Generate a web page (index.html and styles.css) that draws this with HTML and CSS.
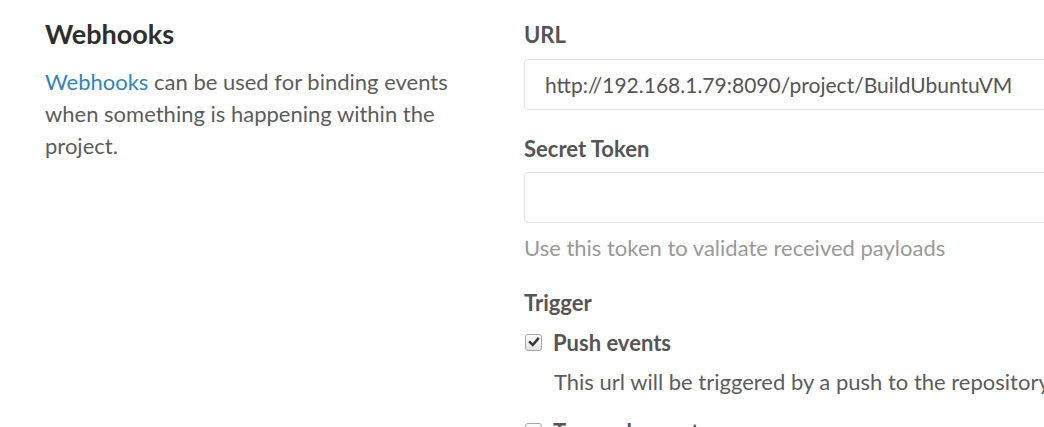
FILE: index.html
```html
<!DOCTYPE html>
<html lang="en">
<head>
<meta charset="utf-8">
<title>Webhooks</title>
<link rel="stylesheet" href="styles.css">
</head>
<body>
<div class="page">
  <aside class="intro">
    <h4 class="intro-title">Webhooks</h4>
    <p class="intro-text"><a class="link" href="#">Webhooks</a> can be used for binding events when something is happening within the project.</p>
  </aside>
  <form class="form">
    <div class="field">
      <label class="label">URL</label>
      <div class="input">http://192.168.1.79:8090/project/BuildUbuntuVM</div>
    </div>
    <div class="field field-token">
      <label class="label">Secret Token</label>
      <div class="input"></div>
      <p class="help">Use this token to validate received payloads</p>
    </div>
    <div class="field field-trigger">
      <label class="label">Trigger</label>
      <div class="check-row">
        <span class="checkbox checked"><svg viewBox="0 0 12 12" width="12" height="12"><path d="M2 6.2 L4.8 9 L10 2.8" fill="none" stroke="#333" stroke-width="2.4" stroke-linecap="square"/></svg></span>
        <span class="check-label">Push events</span>
      </div>
      <p class="check-desc">This url will be triggered by a push to the repository</p>
      <div class="check-row">
        <span class="checkbox"></span>
        <span class="check-label">Tag push events</span>
      </div>
    </div>
  </form>
</div>
</body>
</html>
```
FILE: styles.css
```css
html, body {
  margin: 0;
  padding: 0;
  background: #fff;
  overflow: hidden;
}
body {
  font-family: Lato, "Noto Sans", "Liberation Sans", sans-serif;
  font-size: 22px;
  color: #5c5c5c;
}
.page {
  display: grid;
  grid-template-columns: 434px 700px;
  column-gap: 45px;
  padding-left: 45px;
  width: 1300px;
}
.intro-title {
  margin: 17px 0 0;
  font-size: 27px;
  line-height: 34px;
  font-weight: 700;
  color: #2e2e2e;
}
.intro-text {
  margin: 15px 0 0;
  line-height: 32px;
}
.link {
  color: #3084bb;
  text-decoration: none;
}
.form {
  padding-top: 20px;
}
.field {
  display: flex;
  flex-direction: column;
}
.label {
  font-weight: 700;
  line-height: 30px;
  color: #555;
  margin-bottom: 9px;
}
.input {
  height: 49px;
  border: 1px solid #e2e2e2;
  border-radius: 4px;
  padding: 0 20px;
  line-height: 49px;
  font-size: 21px;
  color: #555;
}
.field-token {
  margin-top: 24px;
}
.field-token .label {
  margin-bottom: 8px;
}
.help {
  margin: 10px 0 0;
  line-height: 30px;
  color: #999;
}
.field-trigger {
  margin-top: 25px;
}
.field-trigger .label {
  margin-bottom: 9px;
}
.check-row {
  display: flex;
  align-items: center;
  gap: 11px;
  height: 30px;
}
.checkbox {
  width: 17px;
  height: 17px;
  margin-left: 1px;
  border: 1px solid #a6a6a6;
  border-radius: 3px;
  background: linear-gradient(#fdfdfd, #e4e4e4);
  display: flex;
  align-items: center;
  justify-content: center;
  box-sizing: border-box;
}
.check-label {
  font-weight: 700;
  color: #555;
}
.check-desc {
  margin: 10px 0 19px 30px;
  line-height: 30px;
  white-space: nowrap;
  color: #5c5c5c;
}
```
